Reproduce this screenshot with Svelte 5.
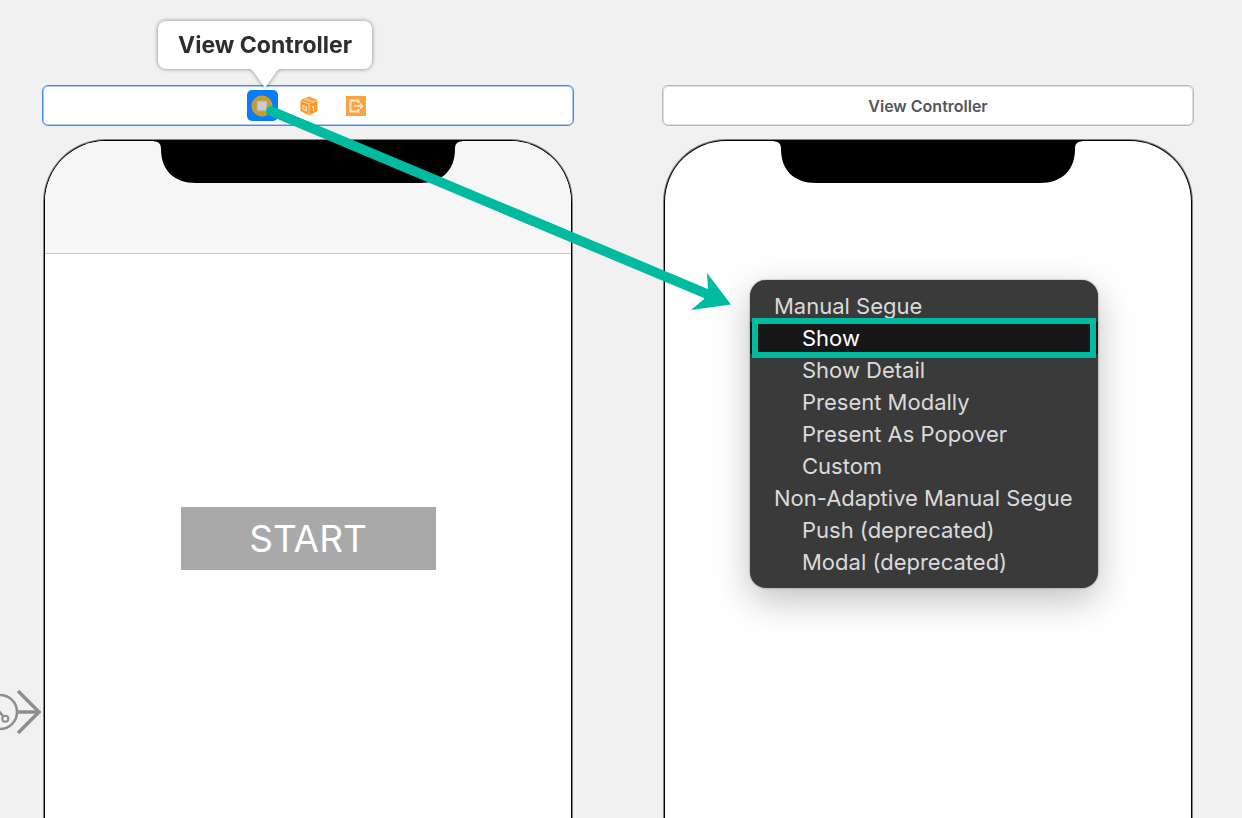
<script>
  const groups = [
    { title: 'Manual Segue', items: ['Show', 'Show Detail', 'Present Modally', 'Present As Popover', 'Custom'] },
    { title: 'Non-Adaptive Manual Segue', items: ['Push (deprecated)', 'Modal (deprecated)'] }
  ];
  let selected = $state('Show');
</script>

{#snippet notch()}
  <svg class="notch" width="308" height="43" viewBox="0 0 308 43" aria-hidden="true">
    <path d="M0 0H308V1.5C303 1.5 301 4 301 9C301 30 288 43 266 43H42C20 43 7 30 7 9C7 4 5 1.5 0 1.5Z" />
  </svg>
{/snippet}

<main class="canvas">
  <section class="scene">
    <header class="dock active">
      <button class="dock-item current" aria-label="View Controller">
        <svg width="22" height="22" viewBox="0 0 22 22">
          <circle cx="11" cy="11" r="10" fill="#c69b2c" stroke="#dda51c" stroke-width="1" />
          <rect x="6" y="6" width="10" height="10" fill="#cccccf" stroke="#b4a77f" stroke-width="1" />
        </svg>
      </button>
      <button class="dock-item" aria-label="First Responder">
        <svg width="22" height="22" viewBox="0 0 22 22">
          <path d="M11 1.5 19.5 5V16L11 20.5 2.5 16V5Z" fill="#fa982e" />
          <path d="M3 5.5 11 9 19 5.5M11 9V20M6 3.8 14.5 7.6M7.8 3 16 6.8" fill="none" stroke="#ffd9a8" stroke-width="0.9" />
          <path d="M5 10.5 8.3 12V15.8L5 14.2ZM14 12.5 15.5 11.5V16" fill="none" stroke="#ffe9cf" stroke-width="1.1" />
        </svg>
      </button>
      <button class="dock-item" aria-label="Exit">
        <svg width="22" height="22" viewBox="0 0 22 22">
          <rect x="1" y="1" width="20" height="20" fill="#f9a443" />
          <path d="M13.5 8V5.5H5.5V16.5H13.5V14" fill="none" stroke="#ffe9cf" stroke-width="1.8" />
          <path d="M9 11H17M15 8.5 17.5 11 15 13.5" fill="none" stroke="#ffe9cf" stroke-width="1.6" />
        </svg>
      </button>
    </header>
    <div class="phone">
      <div class="navbar"></div>
      {@render notch()}
      <button class="start">START</button>
    </div>
    <div class="tooltip" role="tooltip">
      View Controller
      <svg class="pointer" width="30" height="19" viewBox="0 0 30 19" aria-hidden="true">
        <path d="M0 0H30C28 1 27 2 26 3.500L15 19L4 3.500C3 2 2 1 0 0Z" fill="#fff" />
      </svg>
    </div>
  </section>

  <section class="scene">
    <header class="dock"><h2>View Controller</h2></header>
    <div class="phone">
      {@render notch()}
    </div>
    <div class="menu" role="menu">
      {#each groups as group}
        <div class="group">{group.title}</div>
        {#each group.items as item}
          <button class="item" class:selected={selected === item} role="menuitem" onclick={() => (selected = item)}>{item}</button>
        {/each}
      {/each}
    </div>
  </section>

  <svg class="entry" width="42" height="46" viewBox="0 0 42 46" aria-hidden="true">
    <g fill="none" stroke="#8e8e8e">
      <circle cx="0" cy="23" r="17" stroke-width="2.5" />
      <circle cx="5.3" cy="29.7" r="3" stroke-width="2" />
      <path d="M-4 18 3.2 27.4" stroke-width="2.5" />
      <path d="M17 23H38" stroke-width="3.5" />
      <path d="M18 2 39 23 18 44" stroke-width="3.5" />
    </g>
  </svg>

  <svg class="segue" width="742" height="320" viewBox="0 0 742 320" aria-hidden="true">
    <path d="M271 111 707 294" stroke="#00bba0" stroke-width="10" stroke-linecap="round" />
    <path d="M707 273 731 304.5 691 310 704 299 708 289Z" fill="#00bba0" />
  </svg>
</main>

<style>
  :global(body) {
    margin: 0;
    background: #f1f1f1;
  }

  .canvas {
    position: relative;
    display: grid;
    grid-template-columns: 1fr 1fr;
    gap: 88px;
    box-sizing: border-box;
    min-height: 100vh;
    padding: 85px 48px 0 42px;
    overflow: hidden;
    font-family: Inter, "Liberation Sans", sans-serif;
  }

  button {
    margin: 0;
    padding: 0;
    border: 0;
    background: none;
    font: inherit;
    cursor: pointer;
  }

  .scene {
    position: relative;
    display: flex;
    flex-direction: column;
    gap: 14px;
  }

  .dock {
    display: flex;
    align-items: center;
    justify-content: center;
    gap: 16px;
    box-sizing: border-box;
    height: 41px;
    border: 1px solid #b8b8b8;
    border-radius: 6px;
    background: #fff;
    box-shadow: inset 0 0 0 1px #dedede;
  }

  .dock.active {
    padding-left: 2px;
    border-color: #3d89f7;
    box-shadow: inset 0 0 0 1px #a9cbfb;
  }

  h2 {
    margin: 0;
    color: #555;
    font-size: 16px;
    font-weight: 600;
  }

  .dock-item {
    display: grid;
    place-items: center;
    width: 31px;
    height: 31px;
    border-radius: 5px;
  }

  .current {
    background: #0a7bff;
  }

  .phone {
    position: relative;
    display: flex;
    flex: 1;
    flex-direction: column;
    align-items: center;
    margin: 0 2px;
    border: 1px solid #000;
    border-bottom: 0;
    border-radius: 62px 62px 0 0;
    background: #fff;
    box-shadow: 0 0 0 1px rgb(0 0 0 / 45%);
  }

  .navbar {
    align-self: stretch;
    height: 112px;
    border-bottom: 1px solid #cbcbcb;
    border-radius: 61px 61px 0 0;
    background: #f6f6f6;
  }

  .notch {
    position: absolute;
    top: -1px;
    left: calc(50% - 154px);
  }

  .start {
    width: 255px;
    height: 63px;
    margin-top: 253px;
    background: #a9a9a9;
    color: #fff;
    font-size: 37px;
  }

  .tooltip {
    position: absolute;
    top: -64px;
    left: 116px;
    padding: 0 20px;
    border-radius: 8px;
    background: #fff;
    color: #2c2d2e;
    filter: drop-shadow(0 0 2px rgb(0 0 0 / 45%));
    font-size: 23px;
    font-weight: 700;
    line-height: 48px;
    white-space: nowrap;
  }

  .pointer {
    position: absolute;
    top: 48px;
    left: calc(50% - 15px);
  }

  .menu {
    position: absolute;
    top: 195px;
    left: 88px;
    display: flex;
    flex-direction: column;
    box-sizing: border-box;
    width: 348px;
    padding: 10px 0;
    border-radius: 16px;
    background: #3a3a3a;
    box-shadow: 0 0 2px rgb(0 0 0 / 45%), 0 12px 36px rgb(0 0 0 / 25%);
    color: #dadada;
    font-size: 22px;
    line-height: 32px;
  }

  .group {
    padding: 0 24px;
    white-space: nowrap;
  }

  .item {
    position: relative;
    padding: 0 52px;
    color: inherit;
    text-align: left;
    white-space: nowrap;
  }

  .selected {
    background: #171717;
    color: #fff;
  }

  .selected::after {
    position: absolute;
    inset: -4px 2px;
    border: 6px solid #00bba0;
    content: "";
  }

  .entry {
    position: absolute;
    top: 689px;
    left: 0;
  }

  .segue {
    position: absolute;
    top: 0;
    left: 0;
    pointer-events: none;
  }
</style>
